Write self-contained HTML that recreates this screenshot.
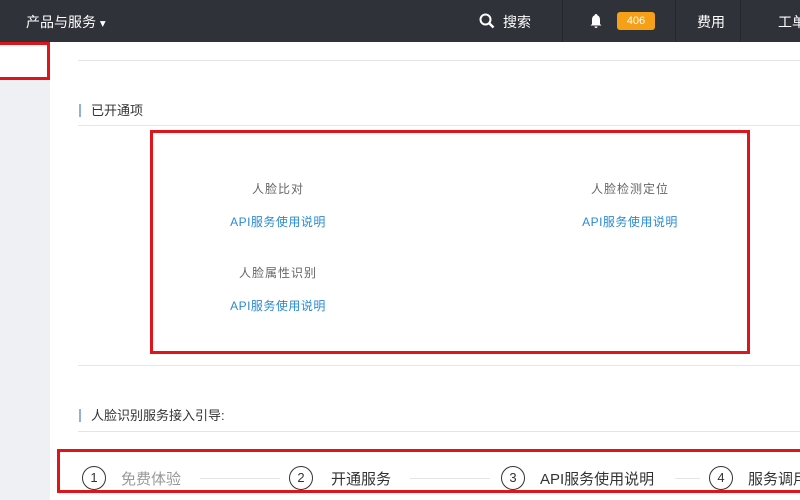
<!DOCTYPE html>
<html><head><meta charset="utf-8"><style>
*{margin:0;padding:0;box-sizing:border-box}
body{width:800px;height:500px;overflow:hidden;background:#fff;font-family:"Liberation Sans","Noto Sans CJK SC",sans-serif;position:relative;white-space:nowrap}
.hdr{position:absolute;left:0;top:0;width:800px;height:42px;background:#2f3238;color:#fff;font-size:14px;overflow:hidden}
.hdr span{position:absolute;top:12px}
.div{position:absolute;top:0;width:1px;height:42px;background:#23262b}
.side{position:absolute;left:0;top:42px;width:50px;height:458px;background:#eef0f3}
.rb{position:absolute;border:3px solid #e0141b}
.line{position:absolute;left:78px;right:0;height:1px;background:#e3e5e8}
.t{position:absolute;font-size:13px;color:#333;border-left:2px solid #8fb3d4;padding-left:10px;line-height:13px}
.g{position:absolute;font-size:12px;color:#666;width:200px;text-align:center;letter-spacing:1px}
.a{position:absolute;font-size:12px;color:#2a8ad4;width:200px;text-align:center;letter-spacing:.5px}
.st{position:absolute;top:468px;font-size:15px;color:#333}
.c{position:absolute;top:466px;width:24px;height:24px;border:1.5px solid #333;border-radius:50%;font-size:13px;text-align:center;line-height:21px;color:#333}
.sl{position:absolute;top:478px;height:1px;background:#e3e5e8}
</style></head><body>
<div class="hdr">
<span style="left:26px">产品与服务 <small>▾</small></span>
<svg style="position:absolute;left:479px;top:13px" width="16" height="16" viewBox="0 0 16 16"><circle cx="6.5" cy="6.5" r="5" fill="none" stroke="#fff" stroke-width="2"/><path d="M10 10l4.5 4.5" stroke="#fff" stroke-width="2.4"/></svg>
<span style="left:503px">搜索</span>
<div class="div" style="left:562px"></div>
<svg style="position:absolute;left:588px;top:13px" width="16" height="16" viewBox="0 0 16 16"><path d="M8 1c-1 0-1.5.8-1.5 1.5C4.5 3 4 5 4 7v4l-1.5 1.5h11L12 11V7c0-2-.5-4-2.5-4.5C9.5 1.8 9 1 8 1z M6.5 13.5h3a1.5 1.5 0 01-3 0z" fill="#fff"/></svg>
<div style="position:absolute;left:617px;top:12px;width:38px;height:18px;background:#f5a016;border-radius:3px;font-size:11px;text-align:center;line-height:18px;color:#fff">406</div>
<div class="div" style="left:675px"></div>
<span style="left:697px">费用</span>
<div class="div" style="left:740px"></div>
<span style="left:778px">工单</span>
</div>
<div class="side"></div>
<div style="position:absolute;left:0;top:42px;width:50px;height:38px;background:#fff;border:3px solid #e0141b;border-left:none"></div>
<div class="line" style="top:60px"></div>
<div class="t" style="left:79px;top:104px">已开通项</div>
<div class="line" style="top:125px"></div>
<div class="rb" style="left:150px;top:130px;width:600px;height:224px"></div>
<div class="g" style="left:178px;top:180px">人脸比对</div>
<div class="a" style="left:178px;top:213px">API服务使用说明</div>
<div class="g" style="left:178px;top:264px">人脸属性识别</div>
<div class="a" style="left:178px;top:297px">API服务使用说明</div>
<div class="g" style="left:530px;top:180px">人脸检测定位</div>
<div class="a" style="left:530px;top:213px">API服务使用说明</div>
<div class="line" style="top:365px"></div>
<div class="t" style="left:79px;top:409px">人脸识别服务接入引导:</div>
<div class="line" style="top:431px"></div>
<div class="rb" style="left:57px;top:449px;width:760px;height:44px"></div>
<div class="c" style="left:82px">1</div><span class="st" style="left:121px;color:#999">免费体验</span>
<div class="sl" style="left:200px;width:80px"></div>
<div class="c" style="left:289px">2</div><span class="st" style="left:331px">开通服务</span>
<div class="sl" style="left:410px;width:80px"></div>
<div class="c" style="left:501px">3</div><span class="st" style="left:540px">API服务使用说明</span>
<div class="sl" style="left:675px;width:25px"></div>
<div class="c" style="left:709px">4</div><span class="st" style="left:748px">服务调用</span>
</body></html>
